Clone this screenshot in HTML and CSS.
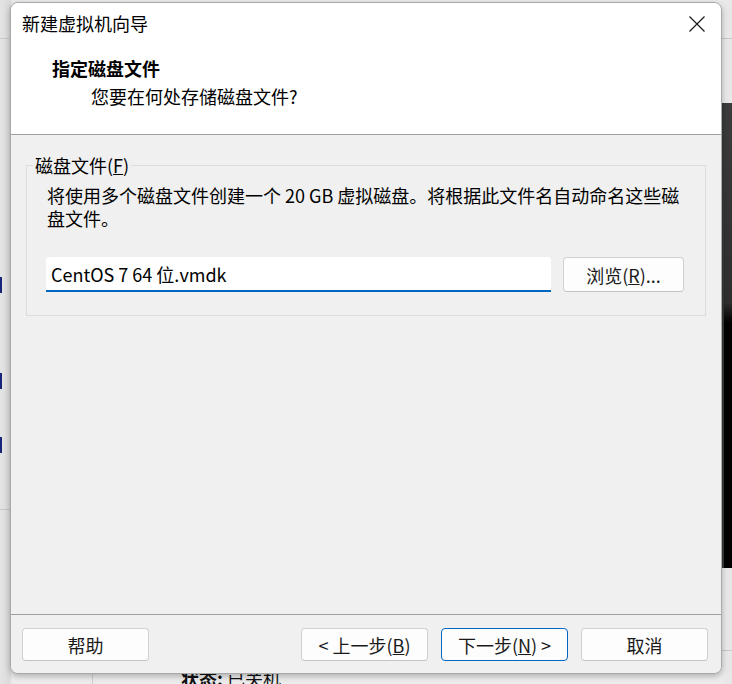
FILE: index.html
```html
<!DOCTYPE html>
<html lang="zh-CN">
<head>
<meta charset="utf-8">
<title>新建虚拟机向导</title>
<link rel="stylesheet" href="styles.css">
</head>
<body>
<div class="desktop">
  <div class="bg-hline bg-hline-top"></div>
  <div class="bg-hline bg-hline-left"></div>
  <div class="bg-hline bg-hline-right"></div>
  <div class="bg-vline"></div>
  <div class="dark-panel"></div>
  <div class="mark mark-1"></div>
  <div class="mark mark-2"></div>
  <div class="mark mark-3"></div>
  <div class="status"><b>状态:</b> 已关机</div>

  <div class="dialog">
    <div class="titlebar">
      <span class="title">新建虚拟机向导</span>
      <svg class="close" width="16" height="16" viewBox="0 0 16 16" aria-hidden="true">
        <path d="M0.5 0.5 L15.5 15.5 M15.5 0.5 L0.5 15.5" stroke="#1a1a1a" stroke-width="1.2" fill="none"/>
      </svg>
    </div>
    <div class="header">
      <div class="heading">指定磁盘文件</div>
      <div class="subheading">您要在何处存储磁盘文件?</div>
    </div>
    <div class="content">
      <fieldset class="group">
        <legend class="legend">磁盘文件(<u>F</u>)</legend>
        <p class="desc">将使用多个磁盘文件创建一个 20 GB 虚拟磁盘。将根据此文件名自动命名这些磁盘文件。</p>
        <div class="file-row">
          <input class="file-input" type="text" value="CentOS 7 64 位.vmdk">
          <button class="btn btn-browse">浏览(<u>R</u>)...</button>
        </div>
      </fieldset>
    </div>
    <div class="footer">
      <button class="btn">帮助</button>
      <div class="nav">
        <button class="btn">&lt; 上一步(<u>B</u>)</button>
        <button class="btn btn-primary">下一步(<u>N</u>) &gt;</button>
        <button class="btn">取消</button>
      </div>
    </div>
  </div>
</div>
</body>
</html>
```
FILE: styles.css
```css
html, body {
  margin: 0;
  padding: 0;
}

body {
  width: 732px;
  height: 684px;
  overflow: hidden;
  background: #e6e6e6;
  font-family: "Noto Sans CJK SC", "Noto Sans", sans-serif;
  color: #000;
}

.desktop {
  position: relative;
  width: 732px;
  height: 684px;
  background: linear-gradient(to right, #e4e4e4 0px, #dadada 10px, #ececec 12px, #ececec 720px, #e6e6e6 732px);
}

.bg-hline {
  position: absolute;
  height: 1px;
  background: #c9c9c9;
}

.bg-hline-top {
  left: 0;
  right: 0;
  top: 38px;
}

.bg-hline-left {
  left: 0;
  width: 12px;
  top: 509px;
}

.bg-hline-right {
  left: 720px;
  right: 0;
  top: 650px;
}

.bg-vline {
  position: absolute;
  left: 92px;
  top: 600px;
  bottom: 0;
  width: 1px;
  background: #cfcfcf;
}

.dark-panel {
  position: absolute;
  left: 722px;
  right: 0;
  top: 103px;
  height: 465px;
  background: linear-gradient(to bottom, #3c3c3c 0px, #2e2e2e 200px, #000 220px, #000 100%);
  border-left: 2px solid #3a3a3a;
}

.mark {
  position: absolute;
  left: 0;
  width: 2px;
  height: 16px;
  background: #16247a;
}

.mark-1 { top: 277px; }
.mark-2 { top: 373px; }
.mark-3 { top: 437px; }

.status {
  position: absolute;
  left: 181px;
  top: 666px;
  font-size: 18px;
  line-height: 24px;
  color: #111;
}

.dialog {
  position: absolute;
  left: 10px;
  top: 2px;
  width: 710px;
  height: 670px;
  border: 1px solid #a9a9a9;
  border-radius: 8px;
  overflow: hidden;
  background: #f0f0f0;
  box-shadow: 0 2px 6px rgba(0, 0, 0, 0.28);
  display: flex;
  flex-direction: column;
}

.titlebar {
  flex: none;
  height: 41px;
  background: #fff;
  display: flex;
  align-items: center;
  justify-content: space-between;
  padding: 0 16px 0 11px;
}

.title {
  font-size: 18px;
  line-height: 41px;
  color: #000;
}

.close {
  display: block;
  margin-top: 1px;
}

.header {
  flex: none;
  height: 90px;
  background: #fff;
  border-bottom: 1px solid #a0a0a0;
  box-sizing: content-box;
}

.heading {
  margin: 12px 0 0 41px;
  font-size: 18px;
  line-height: 24px;
  font-weight: 700;
}

.subheading {
  margin: 4px 0 0 80px;
  font-size: 18px;
  line-height: 24px;
}

.content {
  flex: 1;
  padding-top: 19px;
  background: #f0f0f0;
}

.group {
  margin: 0 15px;
  padding: 8px 21px 23px 19px;
  border: 1px solid #dcdcdc;
  min-inline-size: 0;
}

.legend {
  margin-left: -13px;
  padding: 0 2px;
  font-size: 18px;
  line-height: 22px;
}

.desc {
  margin: 0 0 0 1px;
  font-size: 18px;
  line-height: 23px;
}

.file-row {
  display: flex;
  gap: 12px;
  margin-top: 27px;
}

.file-input {
  flex: 1;
  min-width: 0;
  height: 35px;
  box-sizing: border-box;
  margin: 0;
  padding: 0 5px;
  border: none;
  border-bottom: 2px solid #0067c0;
  border-radius: 3px 3px 0 0;
  background: #fff;
  font-family: inherit;
  font-size: 18px;
  color: #000;
  outline: none;
}

.btn {
  width: 127px;
  height: 33px;
  box-sizing: border-box;
  margin: 0;
  padding: 0;
  border: 1px solid #d0d0d0;
  border-bottom-color: #c4c4c4;
  border-radius: 4px;
  background: #fdfdfd;
  font-family: inherit;
  font-size: 18px;
  line-height: 30px;
  color: #1a1a1a;
}

.btn-browse {
  width: 121px;
  height: 35px;
}

.btn-primary {
  border-color: #0067c0;
}

.footer {
  flex: none;
  height: 59px;
  box-sizing: border-box;
  border-top: 1px solid #a0a0a0;
  background: #f0f0f0;
  display: flex;
  justify-content: space-between;
  align-items: flex-start;
  padding: 13px 13px 0 11px;
}

.nav {
  display: flex;
  gap: 13px;
}
```
